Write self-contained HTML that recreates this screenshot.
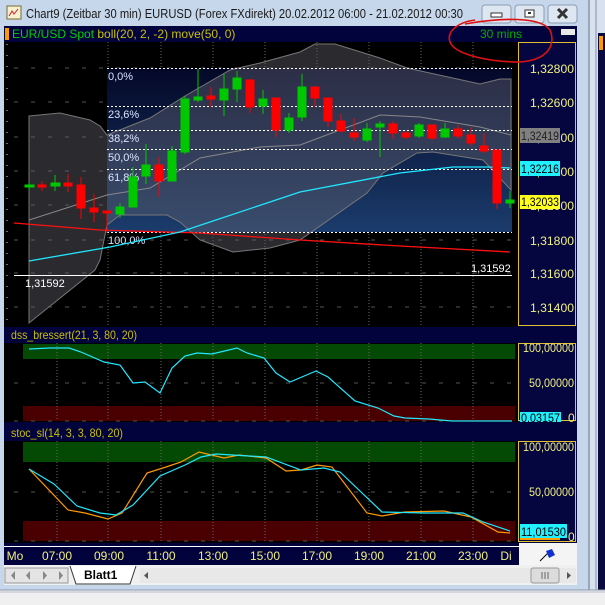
<!DOCTYPE html>
<html><head><style>
html,body{margin:0;padding:0;width:605px;height:605px;overflow:hidden;background:#f0f0f0}
svg{display:block;font-family:"Liberation Sans",sans-serif}
</style></head><body>
<svg width="605" height="605" viewBox="0 0 605 605" xmlns="http://www.w3.org/2000/svg">
<defs>
<linearGradient id="fib" x1="0" y1="0" x2="0" y2="1">
<stop offset="0" stop-color="#040828"/><stop offset="1" stop-color="#1b3c6c"/>
</linearGradient>
</defs>
<rect x="0" y="0" width="605" height="605" fill="#f0f0f0"/>
<rect x="0" y="0" width="588" height="590" fill="#c6d7eb"/>
<rect x="588" y="0" width="17" height="590" fill="#d8e2ee"/>
<line x1="589" y1="0" x2="589" y2="590" stroke="#5a6a80"/>
<line x1="596" y1="0" x2="596" y2="590" stroke="#8090a8"/>
<rect x="598" y="33" width="7" height="557" fill="#0a0a40"/>
<rect x="599" y="36" width="4" height="14" fill="#ff9900"/>
<line x1="0" y1="590" x2="605" y2="590" stroke="#8c9aae"/>
<line x1="0" y1="592" x2="605" y2="592" stroke="#b8c0cc"/>
<rect x="7" y="6" width="14" height="13" fill="#f4f0d0" stroke="#7a6a30"/>
<path d="M9 16 L12 11 L14 14 L18 9" stroke="#d02020" fill="none"/>
<text x="26" y="18" font-size="13" fill="#1a1a1a" textLength="437" lengthAdjust="spacingAndGlyphs">Chart9 (Zeitbar 30 min)  EURUSD (Forex FXdirekt) 20.02.2012 06:00 - 21.02.2012 00:30</text>
<g fill="#dde6f1" stroke="#8a9cb4"><rect x="482" y="5" width="29" height="18" rx="3"/><rect x="515" y="5" width="29" height="18" rx="3"/><rect x="548" y="5" width="29" height="18" rx="3"/></g>
<rect x="491" y="13" width="11" height="4" fill="#fff" stroke="#333"/>
<rect x="525" y="10" width="9" height="7" fill="#fff" stroke="#333"/><rect x="528" y="12" width="3" height="2" fill="#333"/>
<path d="M558 9 L567 18 M567 9 L558 18" stroke="#333" stroke-width="3"/>
<rect x="4" y="26" width="573" height="16" fill="#02023c"/>
<rect x="5" y="28" width="4" height="12" fill="#ff9900"/>
<text x="12" y="38" font-size="12"><tspan fill="#00d000">EUR/USD Spot </tspan><tspan fill="#c8c000">boll(20, 2, -2) move(50, 0)</tspan></text>
<text x="480" y="38" font-size="12" fill="#00b000">30 mins</text>
<rect x="561" y="29" width="14" height="6" fill="#e8e8e8"/>
<rect x="4" y="42" width="515" height="285" fill="#000"/>
<rect x="518" y="42" width="59" height="285" fill="#050540"/>
<rect x="518.5" y="42.5" width="57" height="283" fill="none" stroke="#e0c030"/>
<g stroke="#555" stroke-dasharray="4 13">
<line x1="14" y1="68" x2="518" y2="68"/><line x1="14" y1="102" x2="518" y2="102"/><line x1="14" y1="137" x2="518" y2="137"/><line x1="14" y1="171" x2="518" y2="171"/><line x1="14" y1="205" x2="518" y2="205"/><line x1="14" y1="240" x2="518" y2="240"/><line x1="14" y1="273" x2="518" y2="273"/><line x1="14" y1="307" x2="518" y2="307"/>
</g>
<g stroke="#666" stroke-dasharray="1 2">
<line x1="108" y1="42" x2="108" y2="327"/><line x1="161" y1="42" x2="161" y2="327"/><line x1="213" y1="42" x2="213" y2="327"/><line x1="265" y1="42" x2="265" y2="327"/><line x1="317" y1="42" x2="317" y2="327"/><line x1="369" y1="42" x2="369" y2="327"/><line x1="421" y1="42" x2="421" y2="327"/><line x1="473" y1="42" x2="473" y2="327"/>
</g>
<line x1="7" y1="44" x2="7" y2="325" stroke="#ddd" stroke-dasharray="1 10"/>
<rect x="107" y="68" width="405" height="164" fill="url(#fib)"/>
<path d="M29 116 L60 113 L90 120 L100 126 L107 135 L150 118 L185 96 L230 70 L260 63 L300 52 L315 44 L335 44 L380 58 L407 68 L480 84 L500 79 L511 79 L511 190 L483 160 L433 152 L417 153 L383 173 L367 193 L300 240 L270 248 L233 252 L200 240 L180 222 L167 215 L120 215 L107 225 L100 260 L95 270 L29 323 Z" fill="rgba(100,100,112,0.42)" stroke="#777" stroke-width="1"/>
<polyline points="29,220 107,195 150,188 200,158 260,147 300,145 380,115 420,117 480,127 511,135" fill="none" stroke="#888"/>
<g stroke="#fff" stroke-dasharray="2 2">
<line x1="107" y1="68.5" x2="512" y2="68.5"/><line x1="107" y1="106.5" x2="512" y2="106.5"/><line x1="107" y1="130.5" x2="512" y2="130.5"/><line x1="107" y1="149.5" x2="512" y2="149.5"/><line x1="107" y1="169.5" x2="512" y2="169.5"/><line x1="107" y1="232.5" x2="512" y2="232.5"/>
</g>
<g font-size="11" fill="#d8e4ff">
<text x="108" y="80">0,0%</text><text x="108" y="118">23,6%</text><text x="108" y="142">38,2%</text><text x="108" y="161">50,0%</text><text x="108" y="181">61,8%</text><text x="108" y="244">100,0%</text>
</g>
<polyline points="14,223 100,230 200,233 300,240 400,246 510,252" fill="none" stroke="#ff1010" stroke-width="1.3"/>
<polyline points="29,261 110,247 180,232 300,192 400,173 453,167 487,167 510,168" fill="none" stroke="#20e8ff" stroke-width="1.3"/>
<line x1="14" y1="275.5" x2="512" y2="275.5" stroke="#fff"/>
<text x="25" y="287" font-size="11" fill="#fff">1,31592</text>
<text x="471" y="272" font-size="11" fill="#fff">1,31592</text>
<g stroke="#00c800" fill="#00c800">
<line x1="29" y1="182" x2="29" y2="190"/><rect x="25" y="185" width="9" height="2"/>
<line x1="55" y1="175" x2="55" y2="191"/><rect x="51" y="183" width="9" height="3"/>
<line x1="120" y1="203" x2="120" y2="218"/><rect x="116" y="207" width="8" height="7"/>
<line x1="133" y1="167" x2="133" y2="207"/><rect x="129" y="177" width="8" height="30"/>
<line x1="146" y1="144" x2="146" y2="184"/><rect x="142" y="165" width="8" height="11"/>
<line x1="172" y1="146" x2="172" y2="181"/><rect x="168" y="151" width="8" height="30"/>
<line x1="185" y1="96" x2="185" y2="154"/><rect x="181" y="99" width="8" height="53"/>
<line x1="198" y1="69" x2="198" y2="102"/><rect x="194" y="97" width="8" height="3"/>
<line x1="224" y1="74" x2="224" y2="116"/><rect x="220" y="89" width="8" height="11"/>
<line x1="237" y1="71" x2="237" y2="102"/><rect x="233" y="78" width="8" height="11"/>
<line x1="263" y1="90" x2="263" y2="114"/><rect x="259" y="99" width="8" height="7"/>
<line x1="289" y1="113" x2="289" y2="133"/><rect x="285" y="118" width="8" height="12"/>
<line x1="302" y1="74" x2="302" y2="121"/><rect x="298" y="87" width="8" height="30"/>
<line x1="367" y1="123" x2="367" y2="142"/><rect x="363" y="129" width="8" height="11"/>
<line x1="380" y1="121" x2="380" y2="157"/><rect x="376" y="124" width="8" height="3"/>
<line x1="419" y1="123" x2="419" y2="138"/><rect x="415" y="125" width="8" height="11"/>
<line x1="445" y1="123" x2="445" y2="138"/><rect x="441" y="129" width="8" height="8"/>
<line x1="510" y1="191" x2="510" y2="208"/><rect x="506" y="200" width="8" height="3"/>
</g>
<g stroke="#ff0000" fill="#ff0000">
<line x1="42" y1="181" x2="42" y2="191"/><rect x="38" y="185" width="8" height="2"/>
<line x1="68" y1="174" x2="68" y2="192"/><rect x="64" y="183" width="8" height="3"/>
<line x1="81" y1="177" x2="81" y2="219"/><rect x="77" y="185" width="8" height="23"/>
<line x1="94" y1="194" x2="94" y2="222"/><rect x="90" y="208" width="8" height="4"/>
<line x1="107" y1="211" x2="107" y2="233"/><rect x="103" y="211" width="8" height="2"/>
<line x1="159" y1="157" x2="159" y2="197"/><rect x="155" y="165" width="8" height="16"/>
<line x1="211" y1="87" x2="211" y2="107"/><rect x="207" y="96" width="8" height="3"/>
<line x1="250" y1="79" x2="250" y2="113"/><rect x="246" y="80" width="8" height="27"/>
<line x1="276" y1="98" x2="276" y2="137"/><rect x="272" y="98" width="8" height="32"/>
<line x1="315" y1="87" x2="315" y2="107"/><rect x="311" y="87" width="8" height="11"/>
<line x1="328" y1="98" x2="328" y2="127"/><rect x="324" y="98" width="8" height="23"/>
<line x1="341" y1="114" x2="341" y2="132"/><rect x="337" y="121" width="8" height="10"/>
<line x1="354" y1="118" x2="354" y2="141"/><rect x="350" y="133" width="8" height="4"/>
<line x1="393" y1="121" x2="393" y2="139"/><rect x="389" y="124" width="8" height="9"/>
<line x1="406" y1="131" x2="406" y2="139"/><rect x="402" y="133" width="8" height="4"/>
<line x1="432" y1="125" x2="432" y2="140"/><rect x="428" y="125" width="8" height="13"/>
<line x1="458" y1="125" x2="458" y2="139"/><rect x="454" y="129" width="8" height="7"/>
<line x1="471" y1="127" x2="471" y2="146"/><rect x="467" y="135" width="8" height="8"/>
<line x1="484" y1="133" x2="484" y2="153"/><rect x="480" y="146" width="8" height="5"/>
<line x1="497" y1="150" x2="497" y2="209"/><rect x="493" y="150" width="8" height="53"/>
</g>
<g font-size="12" fill="#f0f080" lengthAdjust="spacingAndGlyphs">
<text x="530" y="73" textLength="44" lengthAdjust="spacingAndGlyphs">1,32800</text><text x="530" y="107" textLength="44" lengthAdjust="spacingAndGlyphs">1,32600</text><text x="530" y="142" textLength="44" lengthAdjust="spacingAndGlyphs">1,32400</text><text x="530" y="176" textLength="44" lengthAdjust="spacingAndGlyphs">1,32200</text><text x="530" y="210" textLength="44" lengthAdjust="spacingAndGlyphs">1,32000</text><text x="530" y="245" textLength="44" lengthAdjust="spacingAndGlyphs">1,31800</text><text x="530" y="278" textLength="44" lengthAdjust="spacingAndGlyphs">1,31600</text><text x="530" y="312" textLength="44" lengthAdjust="spacingAndGlyphs">1,31400</text>
</g>
<rect x="520" y="128" width="40" height="15" fill="#808080"/><text x="521" y="140" font-size="12" fill="#202020" textLength="38" lengthAdjust="spacingAndGlyphs">1,32419</text>
<rect x="520" y="161" width="40" height="15" fill="#20f0ff"/><text x="521" y="173" font-size="12" fill="#000" textLength="38" lengthAdjust="spacingAndGlyphs">1,32216</text>
<rect x="520" y="195" width="40" height="14" fill="#ffff20"/><text x="521" y="206" font-size="12" fill="#000" textLength="38" lengthAdjust="spacingAndGlyphs">1,32033</text>
<rect x="4" y="327" width="573" height="16" fill="#02023c"/>
<text x="11" y="339" font-size="12" fill="#c8c000" textLength="126" lengthAdjust="spacingAndGlyphs">dss_bressert(21, 3, 80, 20)</text>
<rect x="4" y="343" width="515" height="79" fill="#000"/>
<rect x="518" y="343" width="59" height="79" fill="#050540"/>
<rect x="518.5" y="343.5" width="57" height="77" fill="none" stroke="#e0c030"/>
<rect x="23" y="344" width="492" height="15" fill="#044a04"/>
<rect x="23" y="406" width="492" height="15" fill="#4a0000"/>
<g stroke="#666" stroke-dasharray="1 2">
<line x1="57" y1="343" x2="57" y2="421"/><line x1="108" y1="343" x2="108" y2="421"/><line x1="161" y1="343" x2="161" y2="421"/><line x1="213" y1="343" x2="213" y2="421"/><line x1="265" y1="343" x2="265" y2="421"/><line x1="317" y1="343" x2="317" y2="421"/><line x1="369" y1="343" x2="369" y2="421"/><line x1="421" y1="343" x2="421" y2="421"/><line x1="473" y1="343" x2="473" y2="421"/>
</g>
<g stroke="#555" stroke-dasharray="4 13"><line x1="14" y1="383" x2="518" y2="383"/><line x1="14" y1="421" x2="518" y2="421"/></g>
<polyline points="29,349 50,348 69,348 81,352 104,362 120,365 133,383 145,382 160,393 172,368 185,356 197,353 212,354 237,348 247,353 264,358 276,373 290,382 316,371 328,377 355,401 378,408 394,416 405,418 429,419 452,421 512,421" fill="none" stroke="#20e8ff" stroke-width="1.2"/>
<g font-size="12" fill="#f0f080"><text x="523" y="352" textLength="51" lengthAdjust="spacingAndGlyphs">100,00000</text><text x="529" y="387" textLength="45" lengthAdjust="spacingAndGlyphs">50,00000</text><text x="568" y="422">0</text></g>
<rect x="520" y="412" width="41" height="11" fill="#20f0ff"/><text x="521" y="422" font-size="12" fill="#000" textLength="39" lengthAdjust="spacingAndGlyphs">0,03157</text>
<rect x="4" y="422" width="573" height="19" fill="#02023c"/>
<text x="11" y="437" font-size="12" fill="#c8c000" textLength="112" lengthAdjust="spacingAndGlyphs">stoc_sl(14, 3, 3, 80, 20)</text>
<rect x="4" y="441" width="515" height="102" fill="#000"/>
<rect x="518" y="441" width="59" height="102" fill="#050540"/>
<rect x="518.5" y="441.5" width="57" height="100" fill="none" stroke="#e0c030"/>
<rect x="23" y="442" width="492" height="20" fill="#044a04"/>
<rect x="23" y="521" width="492" height="20" fill="#4a0000"/>
<g stroke="#666" stroke-dasharray="1 2">
<line x1="57" y1="441" x2="57" y2="541"/><line x1="108" y1="441" x2="108" y2="541"/><line x1="161" y1="441" x2="161" y2="541"/><line x1="213" y1="441" x2="213" y2="541"/><line x1="265" y1="441" x2="265" y2="541"/><line x1="317" y1="441" x2="317" y2="541"/><line x1="369" y1="441" x2="369" y2="541"/><line x1="421" y1="441" x2="421" y2="541"/><line x1="473" y1="441" x2="473" y2="541"/>
</g>
<g stroke="#555" stroke-dasharray="4 13"><line x1="14" y1="492" x2="518" y2="492"/><line x1="14" y1="541" x2="518" y2="541"/></g>
<polyline points="29,469 68,510 85,513 108,519 122,513 147,473 166,467 181,462 199,452 224,458 239,455 266,458 286,471 301,470 317,465 332,467 367,513 382,516 405,512 444,511 471,517 498,532 510,533" fill="none" stroke="#ff9a00" stroke-width="1.2"/>
<polyline points="29,469 54,484 77,506 100,513 116,515 133,505 160,476 185,465 201,457 216,454 266,457 301,470 324,468 340,472 382,512 425,513 463,513 483,522 510,531" fill="none" stroke="#20e8ff" stroke-width="1.2"/>
<g font-size="12" fill="#f0f080"><text x="523" y="451" textLength="51" lengthAdjust="spacingAndGlyphs">100,00000</text><text x="529" y="496" textLength="45" lengthAdjust="spacingAndGlyphs">50,00000</text><text x="568" y="541">0</text></g>
<rect x="520" y="524" width="47" height="14" fill="#20f0ff"/><text x="521" y="536" font-size="12" fill="#000" textLength="45" lengthAdjust="spacingAndGlyphs">11,01530</text>
<rect x="520" y="538" width="40" height="2" fill="#ff9a00"/>
<rect x="4" y="543" width="515" height="22" fill="#02023c"/>
<line x1="4" y1="546.5" x2="519" y2="546.5" stroke="#fff"/>
<g font-size="12" fill="#f0f080" text-anchor="middle">
<text x="15" y="560">Mo</text><text x="57" y="560">07:00</text><text x="109" y="560">09:00</text><text x="161" y="560">11:00</text><text x="213" y="560">13:00</text><text x="265" y="560">15:00</text><text x="317" y="560">17:00</text><text x="369" y="560">19:00</text><text x="421" y="560">21:00</text><text x="473" y="560">23:00</text><text x="506" y="560">Di</text>
</g>
<rect x="519" y="543" width="58" height="22" fill="#f4f4f4"/>
<line x1="540" y1="561" x2="548" y2="553" stroke="#000"/>
<path d="M546 551 L552 549 L555 555 L549 558 Z" fill="#1030d0"/>
<rect x="4" y="565" width="573" height="20" fill="#f0f0f0"/>
<g fill="#e4e4e4" stroke="#999"><rect x="5" y="568" width="63" height="15"/></g>
<g fill="#888"><path d="M15 571 L11 575.5 L15 580Z"/><path d="M30 571 L26 575.5 L30 580Z"/><path d="M43 571 L47 575.5 L43 580Z"/><path d="M59 571 L63 575.5 L59 580Z"/></g>
<path d="M70 566 L76 584 L130 584 L136 566" fill="#fff" stroke="#333"/>
<text x="84" y="579" font-size="12" font-weight="bold" fill="#000">Blatt1</text>
<rect x="140" y="568" width="436" height="15" fill="#e8e8e8"/>
<path d="M148 572 L144 575.5 L148 579Z" fill="#555"/>
<path d="M567 572 L571 575.5 L567 579Z" fill="#555"/>
<rect x="531" y="568" width="28" height="15" rx="2" fill="#dcdcdc" stroke="#999"/>
<path d="M542 572 v7 M545 572 v7 M548 572 v7" stroke="#666"/>
<path d="M465 24 C500 18 540 16 550 30 C556 45 548 60 520 62 C490 62 455 55 450 42 C446 30 460 22 475 20" fill="none" stroke="#e01010" stroke-width="1.6"/>
</svg>
</body></html>
